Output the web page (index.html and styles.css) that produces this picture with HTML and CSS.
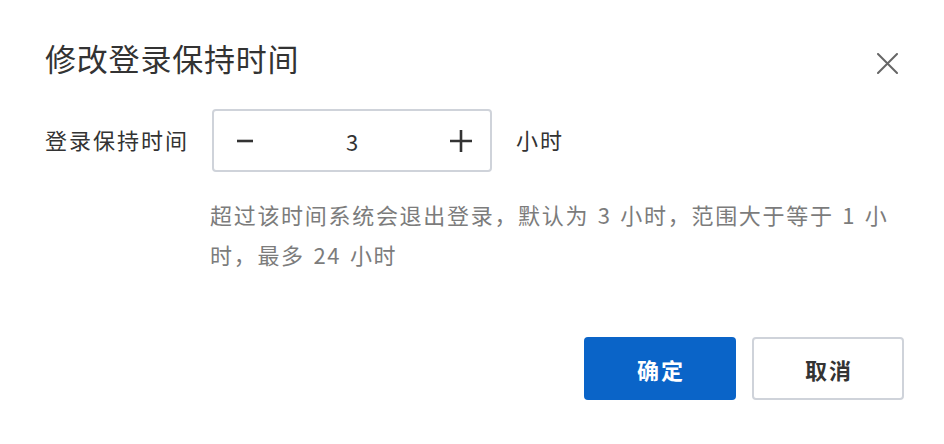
FILE: index.html
```html
<!DOCTYPE html>
<html lang="zh-CN">
<head>
    <meta charset="UTF-8">
    <meta name="viewport" content="width=device-width, initial-scale=1.0">
    <title>修改登录保持时间</title>
    <link rel="stylesheet" href="styles.css">
</head>
<body>

    <div class="dialog">
        <div class="dialog-header">
            <h1>修改登录保持时间</h1>
            <button class="close-btn" aria-label="关闭">
                <svg width="21" height="21" viewBox="0 0 21 21">
                    <path d="M1 1 L20 20 M20 1 L1 20" stroke="#666" stroke-width="2" fill="none" stroke-linecap="round"/>
                </svg>
            </button>
        </div>

        <div class="form-row">
            <label class="form-label">登录保持时间</label>
            <div class="number-input">
                <button class="step-btn minus" aria-label="减少">
                    <svg width="18" height="18" viewBox="0 0 18 18">
                        <path d="M1 9 H17" stroke="#333" stroke-width="2.6"/>
                    </svg>
                </button>
                <span class="value">3</span>
                <button class="step-btn plus" aria-label="增加">
                    <svg width="22" height="22" viewBox="0 0 22 22">
                        <path d="M0 11 H22 M11 0 V22" stroke="#333" stroke-width="2.6"/>
                    </svg>
                </button>
            </div>
            <span class="unit">小时</span>
        </div>

        <p class="hint">超过该时间系统会退出登录，默认为 3 小时，范围大于等于 1 小时，最多 24 小时</p>

        <div class="dialog-footer">
            <button class="btn btn-primary">确定</button>
            <button class="btn btn-default">取消</button>
        </div>
    </div>

</body>
</html>
```

FILE: styles.css
```css
* {
    box-sizing: border-box;
    margin: 0;
    padding: 0;
}
body {
    font-family: "Noto Sans CJK SC", "Noto Sans", sans-serif;
    background-color: #fff;
    color: #333;
    font-size: 22px;
    letter-spacing: 1px;
}
button {
    font-family: inherit;
    background: none;
    border: none;
    cursor: pointer;
}
.dialog {
    padding: 36px 40px 44px 45px;
}
.dialog-header {
    display: flex;
    justify-content: space-between;
    align-items: flex-start;
    height: 44px;
}
.dialog-header h1 {
    font-size: 31px;
    font-weight: 400;
    line-height: 44px;
    letter-spacing: 0.8px;
    color: #333;
}
.close-btn {
    width: 21px;
    height: 21px;
    margin-top: 17px;
    margin-right: 6px;
    display: flex;
}
.form-row {
    display: flex;
    align-items: center;
    margin-top: 29px;
}
.form-label {
    width: 167px;
    line-height: 30px;
    color: #333;
    letter-spacing: 2px;
    margin-top: -4px;
}
.number-input {
    width: 280px;
    height: 63px;
    border: 2px solid #cfd3da;
    border-radius: 4px;
    display: flex;
    align-items: center;
    justify-content: space-between;
    padding: 0 18px 0 22px;
}
.step-btn {
    display: flex;
    align-items: center;
    justify-content: center;
}
.step-btn.plus {
    margin-top: 1px;
}
.value {
    font-size: 22px;
    color: #333;
    letter-spacing: 0;
}
.unit {
    margin-left: 24px;
    margin-top: -4px;
    color: #333;
    letter-spacing: 2px;
}
.hint {
    margin: 22px 0 0 165px;
    max-width: 694px;
    font-size: 22px;
    line-height: 40px;
    letter-spacing: 1.7px;
    word-spacing: 2px;
    color: #7c7c7c;
}
.dialog-footer {
    display: flex;
    justify-content: flex-end;
    gap: 16px;
    margin-top: 63px;
}
.btn {
    width: 152px;
    height: 63px;
    border-radius: 4px;
    font-size: 22px;
    font-weight: 700;
    letter-spacing: 2px;
    padding-left: 2px;
}
.btn-primary {
    background-color: #0a64c8;
    color: #fff;
}
.btn-default {
    background-color: #fff;
    border: 2px solid #cfd3da;
    color: #333;
}
```
